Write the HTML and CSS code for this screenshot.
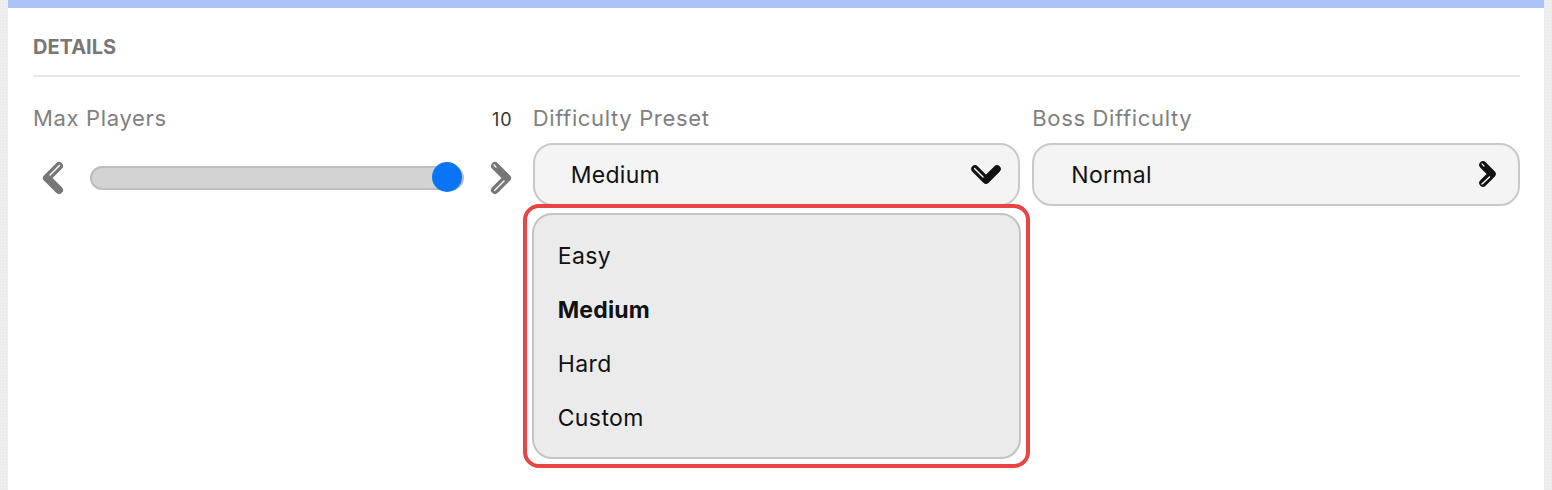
FILE: index.html
```html
<!DOCTYPE html>
<html lang="en">
<head>
<meta charset="utf-8">
<title>Details</title>
<link rel="stylesheet" href="styles.css">
</head>
<body>
<div class="card">
  <h2 class="section-title">DETAILS</h2>
  <div class="fields">
    <div class="field field-slider">
      <div class="label-row">
        <span class="label">Max Players</span>
        <span class="value">10</span>
      </div>
      <div class="slider-row">
        <button class="step-btn" aria-label="Decrease">
          <svg class="chev" width="24" height="34" viewBox="0 0 24 34">
            <polyline points="18,5 6,17 18,29" fill="none" stroke="#777" stroke-width="8" stroke-linecap="round" stroke-linejoin="round"/>
            <polyline points="18.5,4.5 9,14" fill="none" stroke="#fff" stroke-width="1.4" stroke-linecap="round"/>
          </svg>
        </button>
        <div class="track">
          <span class="thumb"></span>
        </div>
        <button class="step-btn" aria-label="Increase">
          <svg class="chev" width="24" height="34" viewBox="0 0 24 34">
            <polyline points="6,5 18,17 6,29" fill="none" stroke="#777" stroke-width="8" stroke-linecap="round" stroke-linejoin="round"/>
            <polyline points="15,20 5.5,29.5" fill="none" stroke="#fff" stroke-width="1.4" stroke-linecap="round"/>
            <polyline points="5,4 7,6" fill="none" stroke="#fff" stroke-width="1.2" stroke-linecap="round"/>
          </svg>
        </button>
      </div>
    </div>

    <div class="field field-menu">
      <div class="label-row">
        <span class="label">Difficulty Preset</span>
      </div>
      <div class="select">
        <span class="select-text">Medium</span>
        <svg class="chev" width="32" height="22" viewBox="0 0 32 22">
          <polyline points="5,5 16,16 27,5" fill="none" stroke="#111" stroke-width="7.5" stroke-linecap="round" stroke-linejoin="round"/>
          <polyline points="4.5,4.5 13,13" fill="none" stroke="#fff" stroke-width="1.4" stroke-linecap="round"/>
        </svg>
      </div>
      <div class="menu-highlight">
        <ul class="menu">
          <li class="menu-item">Easy</li>
          <li class="menu-item selected">Medium</li>
          <li class="menu-item">Hard</li>
          <li class="menu-item">Custom</li>
        </ul>
      </div>
    </div>

    <div class="field">
      <div class="label-row">
        <span class="label">Boss Difficulty</span>
      </div>
      <div class="select select-boss">
        <span class="select-text">Normal</span>
        <svg class="chev" width="22" height="30" viewBox="0 0 22 30">
          <polyline points="7,5 16,14 7,23" fill="none" stroke="#111" stroke-width="7.5" stroke-linecap="round" stroke-linejoin="round"/>
          <polyline points="13.5,17 6,24" fill="none" stroke="#fff" stroke-width="1.4" stroke-linecap="round"/>
          <polyline points="6,4 8,6" fill="none" stroke="#fff" stroke-width="1.2" stroke-linecap="round"/>
        </svg>
      </div>
    </div>
  </div>
</div>
</body>
</html>
```

FILE: styles.css
```css
html, body {
  margin: 0;
  padding: 0;
}

body {
  background-color: #ececec;
  background-image: radial-gradient(#f6f6f6 0.6px, transparent 0.8px);
  background-size: 3px 3px;
  padding: 0 8px;
  font-family: Inter, "Liberation Sans", sans-serif;
  height: 490px;
  overflow: hidden;
}

.card {
  background: #fff;
  border-top: 8px solid #a9c4f5;
  padding: 0 24px 0 25px;
  min-height: 482px;
}

.section-title {
  margin: 0;
  padding-top: 27px;
  padding-bottom: 16px;
  border-bottom: 2px solid #e8e8e8;
  font-size: 20px;
  line-height: 24px;
  font-weight: 700;
  color: #777;
}

.fields {
  display: grid;
  grid-template-columns: 1fr 1fr 1fr;
  column-gap: 12px;
  margin-top: 27px;
}

.field {
  display: flex;
  flex-direction: column;
}

.field-menu {
  position: relative;
}

.label-row {
  display: flex;
  justify-content: space-between;
  align-items: baseline;
  height: 28px;
}

.label {
  font-size: 22px;
  line-height: 28px;
  letter-spacing: 0.65px;
  color: #808080;
}

.value {
  font-size: 18px;
  letter-spacing: 1px;
  color: #333;
  padding-right: 8px;
}

.slider-row {
  display: flex;
  align-items: center;
  margin-top: 31px;
  height: 30px;
}

.step-btn {
  width: 40px;
  height: 34px;
  padding: 0;
  border: 0;
  background: none;
  display: flex;
  align-items: center;
  justify-content: center;
  flex: none;
}

.track {
  flex: 1;
  margin: 0 17px;
  height: 24px;
  box-sizing: border-box;
  border: 2px solid #bdbdbd;
  border-radius: 12px;
  background: #d3d3d3;
  position: relative;
}

.thumb {
  position: absolute;
  right: 0;
  top: 50%;
  width: 30px;
  height: 30px;
  margin-top: -16px;
  border-radius: 50%;
  background: #0a74f7;
}

.select {
  margin-top: 11px;
  height: 63px;
  box-sizing: border-box;
  border: 2px solid #c9c9c9;
  border-radius: 20px;
  background: #f4f4f4;
  display: flex;
  align-items: center;
  justify-content: space-between;
  padding: 0 16px 0 36px;
}

.select-boss {
  padding-right: 20px;
  padding-left: 37px;
}

.select-text {
  font-size: 23px;
  letter-spacing: 0.3px;
  color: #111;
}

.menu-highlight {
  position: absolute;
  top: 100px;
  left: -10px;
  right: -10px;
  border: 4px solid #e84545;
  border-radius: 16px;
  padding: 5px;
  background: #fff;
}

.menu {
  list-style: none;
  margin: 0;
  padding: 14px 0 12px;
  border: 2px solid #c4c4c4;
  border-radius: 20px;
  background: #ebebeb;
}

.menu-item {
  height: 54px;
  line-height: 54px;
  padding-left: 24px;
  font-size: 23px;
  letter-spacing: 0.4px;
  color: #111;
}

.menu-item.selected {
  font-weight: 700;
  letter-spacing: 0.2px;
}
```
